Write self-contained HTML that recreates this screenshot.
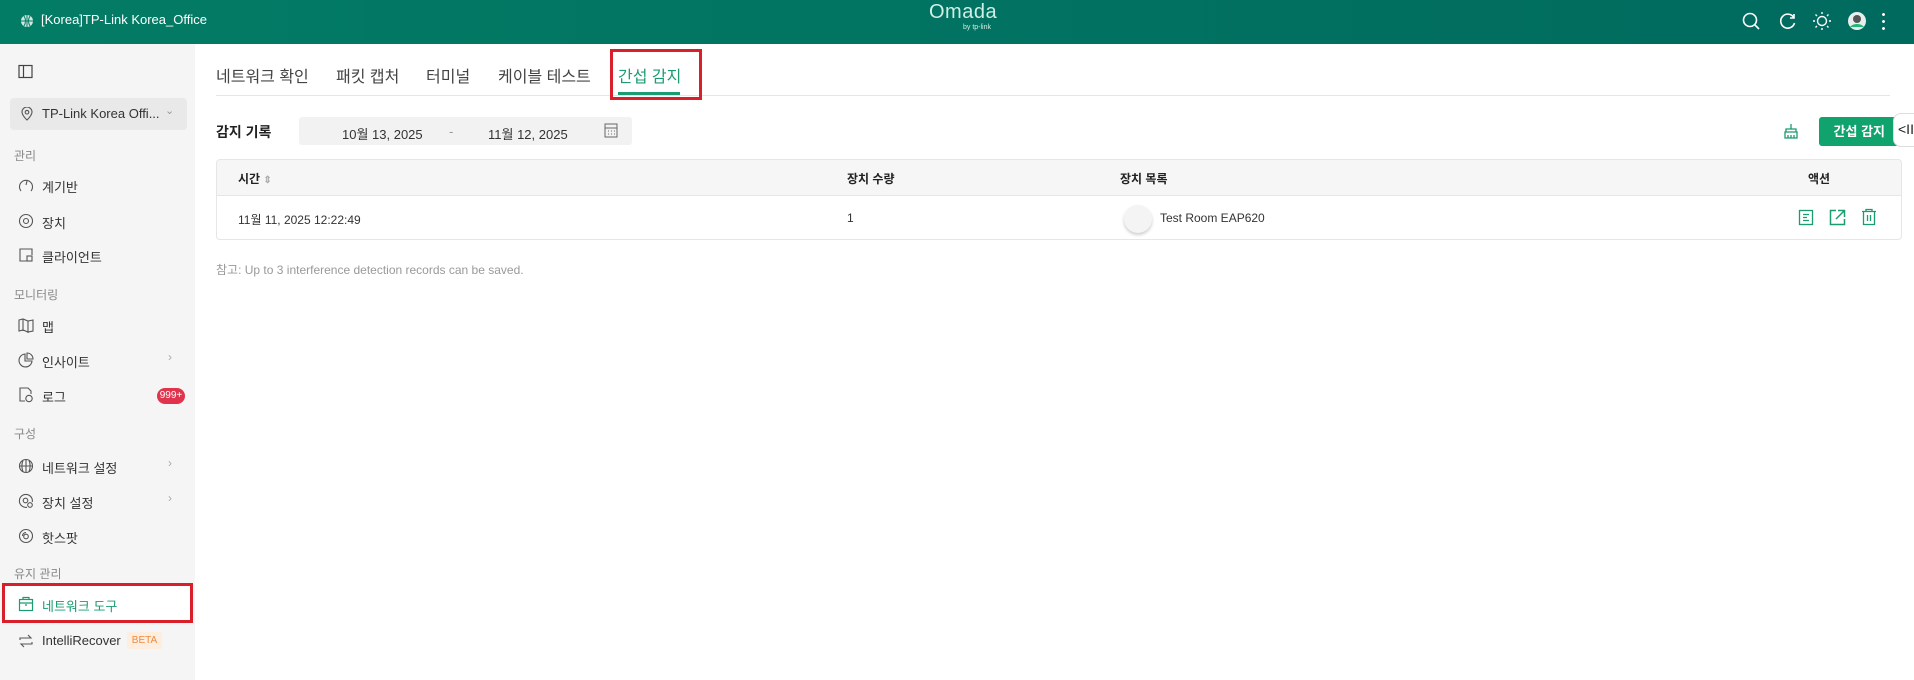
<!DOCTYPE html>
<html><head><meta charset="utf-8"><style>
*{margin:0;padding:0;box-sizing:border-box}
body{width:1914px;height:680px;overflow:hidden;background:#fff;font-family:"Liberation Sans","Noto Sans CJK KR",sans-serif;color:#222;position:relative}
.hdr{position:absolute;left:0;top:0;width:1914px;height:44px;background:linear-gradient(90deg,#037c65,#006a5e)}
.abs{position:absolute;white-space:nowrap}
.side{position:absolute;left:0;top:44px;width:195px;height:636px;background:#f5f5f5}
.sec{position:absolute;left:14px;font-size:12px;color:#888}
.it{position:absolute;left:42px;font-size:13px;color:#333}
.ic{position:absolute;left:18px;width:16px;height:16px}
.chev{position:absolute;left:168px;font-size:12px;color:#aaa}
.tab{position:absolute;top:63px;font-size:16px;color:#444}
.th{position:absolute;top:170px;font-size:12px;font-weight:bold;color:#222}
svg{display:block}
</style></head><body>
<div class="hdr">
 <svg class="abs" style="left:20px;top:14px" width="14" height="14" viewBox="0 0 14 14"><circle cx="7" cy="7" r="6" fill="#cfe9e2"/><path d="M1 7h12M7 1v12M4 2c2 3 2 7 0 10M10 2c-2 3-2 7 0 10" stroke="#037c65" stroke-width="1" fill="none"/></svg>
 <div class="abs" style="left:41px;top:12px;font-size:13px;color:#fff">[Korea]TP-Link Korea_Office</div>
 <div class="abs" style="left:929px;top:1px;font-size:20px;color:#cfeee5;letter-spacing:.5px">Omada</div>
 <div class="abs" style="left:963px;top:24px;font-size:7px;color:#cfeee5">by tp-link</div>
 <svg class="abs" style="left:1741px;top:11px" width="20" height="20" viewBox="0 0 20 20" fill="none" stroke="#fff" stroke-width="1.6"><circle cx="9" cy="9" r="6.5"/><path d="M14 14l4 4"/></svg>
 <svg class="abs" style="left:1778px;top:11px" width="20" height="20" viewBox="0 0 20 20" fill="none" stroke="#fff" stroke-width="1.6"><path d="M16 7A7 7 0 1 0 16.5 12"/><path d="M16 3v4h-4"/></svg>
 <svg class="abs" style="left:1811px;top:10px" width="22" height="22" viewBox="0 0 22 22" fill="none" stroke="#fff" stroke-width="1.4"><circle cx="11" cy="11" r="4.5"/><path d="M11 2v2M11 18v2M2 11h2M18 11h2M4.5 4.5l1.5 1.5M16 16l1.5 1.5M4.5 17.5L6 16M16 6l1.5-1.5"/></svg>
 <svg class="abs" style="left:1847px;top:11px" width="20" height="20" viewBox="0 0 20 20"><circle cx="10" cy="10" r="9" fill="#e8eeec"/><circle cx="10" cy="8" r="4" fill="#555"/><path d="M3 16c3-4 11-4 14 0" fill="#22b777"/></svg>
 <div class="abs" style="left:1882px;top:11px;width:3px;height:20px;background:radial-gradient(circle,#fff 1.3px,transparent 1.6px) 0 0/3px 7px"></div>
</div>

<div class="side">
 <svg class="abs" style="left:18px;top:20px" width="15" height="15" viewBox="0 0 15 15" fill="none" stroke="#444" stroke-width="1.2"><rect x="1" y="1.5" width="13" height="12"/><path d="M5.5 1.5v12"/></svg>
 <div class="abs" style="left:10px;top:54px;width:177px;height:32px;background:#e9e9e9;border-radius:4px"></div>
 <svg class="abs" style="left:20px;top:63px" width="14" height="14" viewBox="0 0 14 14" fill="none" stroke="#555" stroke-width="1.1"><path d="M7 13s-5-4.5-5-8a5 5 0 0 1 10 0c0 3.5-5 8-5 8z"/><circle cx="7" cy="5.2" r="1.8"/></svg>
 <div class="abs" style="left:42px;top:62px;font-size:13px;color:#333">TP-Link Korea Offi...</div>
 <div class="abs" style="left:165px;top:60px;font-size:11px;color:#999">⌄</div>

 <div class="sec" style="top:103px">관리</div>
 <svg class="ic" style="top:133px" viewBox="0 0 16 16" fill="none" stroke="#555" stroke-width="1.1"><path d="M3 14A6.5 6.5 0 1 1 13 14"/><path d="M8 8l1-4"/></svg><div class="it" style="top:133px">계기반</div>
 <svg class="ic" style="top:169px" viewBox="0 0 16 16" fill="none" stroke="#555" stroke-width="1.1"><circle cx="8" cy="8" r="6.5"/><circle cx="8" cy="8" r="2.5"/></svg><div class="it" style="top:169px">장치</div>
 <svg class="ic" style="top:203px" viewBox="0 0 16 16" fill="none" stroke="#555" stroke-width="1.1"><path d="M14 8V2H2v12h7"/><rect x="9" y="9" width="5" height="5"/></svg><div class="it" style="top:203px">클라이언트</div>
 <div class="sec" style="top:242px">모니터링</div>
 <svg class="ic" style="top:273px" viewBox="0 0 16 16" fill="none" stroke="#555" stroke-width="1.1"><path d="M1 3l4-1 5 2 5-1v11l-5 1-5-2-4 1zM5 2v12M10 4v12"/></svg><div class="it" style="top:273px">맵</div>
 <svg class="ic" style="top:308px" viewBox="0 0 16 16" fill="none" stroke="#555" stroke-width="1.1"><path d="M7 2a6.5 6.5 0 1 0 7 7H7z"/><path d="M9 1v6h6a6 6 0 0 0-6-6z"/></svg><div class="it" style="top:308px">인사이트</div><div class="chev" style="top:306px">›</div>
 <svg class="ic" style="top:343px" viewBox="0 0 16 16" fill="none" stroke="#555" stroke-width="1.1"><path d="M7 14H2V1h8l3 3v3"/><circle cx="11" cy="11.5" r="3.2"/></svg><div class="it" style="top:343px">로그</div>
 <div class="abs" style="left:157px;top:344px;width:28px;height:16px;border-radius:8px;background:#e2334d;color:#fff;font-size:10px;text-align:center;line-height:16px">999+</div>
 <div class="sec" style="top:381px">구성</div>
 <svg class="ic" style="top:414px" viewBox="0 0 16 16" fill="none" stroke="#555" stroke-width="1.1"><circle cx="8" cy="8" r="6.5"/><path d="M1.5 8h13M8 1.5v13M5 2.5c-1.5 3-1.5 8 0 11M11 2.5c1.5 3 1.5 8 0 11"/></svg><div class="it" style="top:414px">네트워크 설정</div><div class="chev" style="top:412px">›</div>
 <svg class="ic" style="top:449px" viewBox="0 0 16 16" fill="none" stroke="#555" stroke-width="1.1"><path d="M9 14.3A6.5 6.5 0 1 1 14.3 9"/><circle cx="7.5" cy="7.5" r="2.3"/><circle cx="12" cy="12" r="2.3"/></svg><div class="it" style="top:449px">장치 설정</div><div class="chev" style="top:447px">›</div>
 <svg class="ic" style="top:484px" viewBox="0 0 16 16" fill="none" stroke="#555" stroke-width="1.1"><circle cx="8" cy="8" r="6.5"/><circle cx="8" cy="8.5" r="2.3"/><path d="M4.5 8a3.5 3.5 0 0 1 3.5-3.5"/></svg><div class="it" style="top:484px">핫스팟</div>
 <div class="sec" style="top:521px">유지 관리</div>
 <div class="abs" style="left:2px;top:539px;width:191px;height:40px;background:#fff;border:3px solid #d9202a"></div>
 <svg class="ic" style="top:552px" viewBox="0 0 16 16" fill="none" stroke="#1a9b72" stroke-width="1.2"><rect x="1.5" y="3.5" width="13" height="11"/><path d="M1.5 7h13M5 3.5V1.5h6v2M7 9h2"/></svg><div class="it" style="top:552px;color:#1a9b72">네트워크 도구</div>
 <svg class="ic" style="top:589px" viewBox="0 0 16 16" fill="none" stroke="#555" stroke-width="1.1"><path d="M2 7V5h11l-3-3M14 9v2H3l3 3"/></svg><div class="it" style="top:589px">IntelliRecover</div>
 <div class="abs" style="left:127px;top:588px;width:35px;height:17px;background:#fdeee0;color:#f08a3c;font-size:10px;text-align:center;line-height:17px">BETA</div>
</div>

<div class="tab" style="left:216px">네트워크 확인</div>
<div class="tab" style="left:336px">패킷 캡처</div>
<div class="tab" style="left:426px">터미널</div>
<div class="tab" style="left:498px">케이블 테스트</div>
<div class="tab" style="left:618px;color:#1a9b72">간섭 감지</div>
<div class="abs" style="left:216px;top:95px;width:1674px;height:1px;background:#e6e6e6"></div>
<div class="abs" style="left:618px;top:92px;width:62px;height:3px;background:#1a9b72"></div>
<div class="abs" style="left:610px;top:49px;width:92px;height:51px;border:3px solid #d9202a"></div>

<div class="abs" style="left:216px;top:122px;font-size:14px;font-weight:bold">감지 기록</div>
<div class="abs" style="left:299px;top:117px;width:333px;height:28px;background:#f2f2f2;border-radius:3px"></div>
<div class="abs" style="left:342px;top:124px;font-size:13px;color:#333">10월 13, 2025</div>
<div class="abs" style="left:449px;top:124px;font-size:13px;color:#999">-</div>
<div class="abs" style="left:488px;top:124px;font-size:13px;color:#333">11월 12, 2025</div>
<svg class="abs" style="left:604px;top:123px" width="14" height="15" viewBox="0 0 14 15" fill="none" stroke="#666" stroke-width="1"><rect x="1" y="1" width="12" height="13"/><path d="M1 5h12M4 8h1M7 8h1M10 8h1M4 11h1M7 11h1M10 11h1"/></svg>
<svg class="abs" style="left:1783px;top:123px" width="16" height="16" viewBox="0 0 16 16" fill="none" stroke="#1a9b72" stroke-width="1.3"><path d="M8 1v5M3 6h10v3H3zM2 9h12v6H2zM5 12v3M8 12v3M11 12v3"/></svg>
<div class="abs" style="left:1819px;top:117px;width:80px;height:29px;background:#10a36d;border-radius:3px;color:#fff;font-size:13px;font-weight:bold;line-height:29px;text-align:right;padding-right:14px">간섭 감지</div>
<div class="abs" style="left:1893px;top:113px;width:30px;height:34px;background:#fff;border:1px solid #ddd;border-radius:8px 0 0 8px;font-size:14px;padding:7px 0 0 4px">&lt;II</div>

<div class="abs" style="left:216px;top:159px;width:1686px;height:81px;border:1px solid #e6e6e6;border-radius:4px;overflow:hidden">
 <div style="height:36px;background:#f6f6f6;border-bottom:1px solid #e6e6e6"></div>
</div>
<div class="th" style="left:238px">시간 <span style="color:#aaa;font-size:10px">⇕</span></div>
<div class="th" style="left:847px">장치 수량</div>
<div class="th" style="left:1120px">장치 목록</div>
<div class="th" style="left:1808px">액션</div>
<div class="abs" style="left:238px;top:211px;font-size:12px;color:#333">11월 11, 2025 12:22:49</div>
<div class="abs" style="left:847px;top:211px;font-size:12px;color:#333">1</div>
<div class="abs" style="left:1124px;top:205px;width:28px;height:28px;border-radius:50%;background:#f4f4f4;box-shadow:0 2px 3px rgba(0,0,0,.2)"></div>
<div class="abs" style="left:1160px;top:211px;font-size:12px;color:#333">Test Room EAP620</div>
<svg class="abs" style="left:1798px;top:209px" width="16" height="17" viewBox="0 0 16 17" fill="none" stroke="#1a9b72" stroke-width="1.3"><rect x="1.5" y="1.5" width="13" height="14"/><path d="M5 5.5h6M5 8.5h4M5 11.5h6"/></svg>
<svg class="abs" style="left:1829px;top:209px" width="17" height="17" viewBox="0 0 17 17" fill="none" stroke="#1a9b72" stroke-width="1.5"><path d="M7 1.5H1.5v14h14V10M9 1.5h6.5V8M15.5 1.5L7 10"/></svg>
<svg class="abs" style="left:1861px;top:208px" width="16" height="18" viewBox="0 0 16 18" fill="none" stroke="#1a9b72" stroke-width="1.3"><path d="M1 3.5h14M5 3.5V1.5h6v2M2.5 3.5v13h11v-13M6.5 7v6M9.5 7v6"/></svg>

<div class="abs" style="left:216px;top:261px;font-size:12px;color:#999">참고: Up to 3 interference detection records can be saved.</div>
</body></html>
